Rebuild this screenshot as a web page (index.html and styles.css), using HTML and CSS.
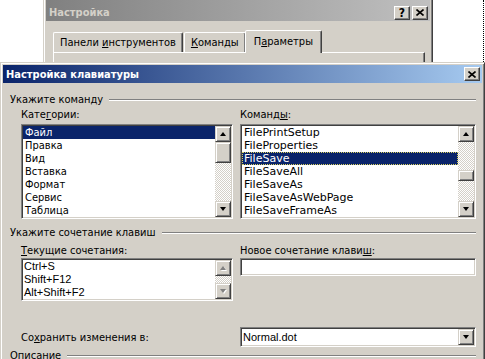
FILE: index.html
```html
<!DOCTYPE html>
<html>
<head>
<link rel="stylesheet" href="styles.css">
</head>
<body>

<div class="dots"></div>

<div class="win win-back">
	<div class="cap cap-off">
		<span class="cap-text">Настройка</span>
		<span class="cbtn cbtn-help">?</span>
		<span class="cbtn"><svg width="8" height="7" viewBox="0 0 8 7"><path d="M0.5 0.5L7.5 6.5M7.5 0.5L0.5 6.5" stroke="#000" stroke-width="1.6"/></svg></span>
	</div>
	<div class="tabs">
		<span class="tab">Панели <u>и</u>нструментов</span>
		<span class="tab"><u>К</u>оманды</span>
		<span class="tab tab-on">П<u>а</u>раметры</span>
	</div>
	<div class="tab-panel"></div>
</div>

<div class="win win-front">
	<div class="cap">
		<span class="cap-text">Настройка клавиатуры</span>
		<span class="cbtn"><svg width="8" height="7" viewBox="0 0 8 7"><path d="M0.5 0.5L7.5 6.5M7.5 0.5L0.5 6.5" stroke="#000" stroke-width="1.6"/></svg></span>
	</div>
	<div class="body">
		<div class="group">Укажите команду<i class="etch"></i></div>
		<div class="cols">
			<div class="col">
				<div class="lbl">Кате<u>г</u>ории:</div>
				<div class="list list-tall">
					<div class="items">
						<div class="item item-sel">Файл</div>
						<div class="item">Правка</div>
						<div class="item">Вид</div>
						<div class="item">Вставка</div>
						<div class="item">Формат</div>
						<div class="item">Сервис</div>
						<div class="item">Таблица</div>
					</div>
					<div class="vscroll">
						<span class="sbtn"><i class="arr-up"></i></span>
						<span class="thumb thumb-cat"></span>
						<span class="track"></span>
						<span class="sbtn"><i class="arr-down"></i></span>
					</div>
				</div>
			</div>
			<div class="col">
				<div class="lbl">Команд<u>ы</u>:</div>
				<div class="list list-tall">
					<div class="items items-cmd">
						<div class="item">FilePrintSetup</div>
						<div class="item">FileProperties</div>
						<div class="item item-sel item-focus">FileSave</div>
						<div class="item">FileSaveAll</div>
						<div class="item">FileSaveAs</div>
						<div class="item">FileSaveAsWebPage</div>
						<div class="item">FileSaveFrameAs</div>
					</div>
					<div class="vscroll">
						<span class="sbtn"><i class="arr-up"></i></span>
						<span class="track track-top"></span>
						<span class="thumb thumb-cmd"></span>
						<span class="track"></span>
						<span class="sbtn"><i class="arr-down"></i></span>
					</div>
				</div>
			</div>
		</div>

		<div class="group group-2">Укажите сочетание клавиш<i class="etch"></i></div>
		<div class="cols">
			<div class="col">
				<div class="lbl lbl-2"><u>Т</u>екущие сочетания:</div>
				<div class="list list-keys">
					<div class="items items-sys">
						<div class="item">Ctrl+S</div>
						<div class="item">Shift+F12</div>
						<div class="item">Alt+Shift+F2</div>
					</div>
					<div class="vscroll">
						<span class="sbtn"><i class="arr-up arr-off"></i></span>
						<span class="track"></span>
						<span class="sbtn"><i class="arr-down arr-off"></i></span>
					</div>
				</div>
			</div>
			<div class="col">
				<div class="lbl lbl-2">Новое сочетание клави<u>ш</u>:</div>
				<div class="field"></div>
			</div>
		</div>

		<div class="cols save-row">
			<div class="col save-lbl">Со<u>х</u>ранить изменения в:</div>
			<div class="col">
				<div class="combo">
					<span class="combo-val">Normal.dot</span>
					<span class="sbtn"><i class="arr-down"></i></span>
				</div>
			</div>
		</div>

		<div class="group group-3">Описание<i class="etch"></i></div>
	</div>
</div>

</body>
</html>
```

FILE: styles.css
```css
body {
	margin:0;
	background-color:#fff;
	font:11px "DejaVu Sans Condensed", "Liberation Sans", sans-serif;
	color:#000;
	overflow:hidden;
}
u {
	text-decoration:underline;
	text-underline-offset:1px;
}
.dots {
	position:absolute;
	left:483px;
	top:0;
	height:62px;
	border-left:1px dotted #000;
}
.win {
	position:absolute;
	background-color:#d4d0c8;
	border:1px solid;
	border-color:#d4d0c8 #404040 #404040 #d4d0c8;
	box-shadow:inset 1px 1px #fff, inset -1px -1px #808080;
	padding:2px;
}
.win-back {
	left:43px;
	top:-3px;
	width:384px;
	height:120px;
}
.win-front {
	left:0;
	top:62px;
	width:479px;
	height:320px;
}
.cap {
	display:flex;
	align-items:center;
	height:18px;
	padding:0 2px 0 2px;
	background:linear-gradient(to right, #0a246a, #a6caf0);
	color:#fff;
}
.cap-off {
	height:21px;
	background:linear-gradient(to right, #808080, #c0c0c0);
	color:#d4d0c8;
}
.cap-text {
	flex:1;
	font-weight:bold;
	padding-left:1px;
}
.cap-off .cap-text {
	padding-top:4px;
}
.cbtn {
	display:flex;
	align-items:center;
	justify-content:center;
	width:14px;
	height:12px;
	background-color:#d4d0c8;
	border:1px solid;
	border-color:#fff #404040 #404040 #fff;
	box-shadow:inset -1px -1px #808080;
	color:#000;
	font-weight:bold;
	font-size:12px;
	line-height:12px;
}
.cap-off .cbtn {
	margin-top:4px;
}
.cbtn-help {
	margin-right:2px;
}

.tabs {
	display:flex;
	align-items:flex-end;
	height:31px;
	padding-left:7px;
}
.tab {
	height:19px;
	line-height:19px;
	padding:0 6px;
	border:1px solid;
	border-bottom:none;
	border-color:#fff #404040 transparent #fff;
	border-radius:2px 2px 0 0;
	box-shadow:inset -1px 0 #808080;
	margin-right:1px;
}
.tab-on {
	height:22px;
	line-height:22px;
	margin:0 0 -1px -2px;
	padding:0 8px;
	position:relative;
	z-index:1;
	background-color:#d4d0c8;
}
.tab-panel {
	margin-left:7px;
	width:370px;
	height:60px;
	border:1px solid;
	border-color:#fff #404040 #404040 #fff;
	box-shadow:inset -1px 0 #808080;
}

.body {
	padding:10px 6px 0 7px;
}
.group {
	display:flex;
	align-items:center;
	height:13px;
	line-height:13px;
}
.etch {
	flex:1;
	margin-left:6px;
	border-top:1px solid #808080;
	border-bottom:1px solid #fff;
}
.group-2 {
	margin-top:7px;
}
.group-3 {
	margin-top:2px;
}
.cols {
	display:grid;
	grid-template-columns:212px 236px;
	column-gap:7px;
	padding-left:11px;
}
.lbl {
	height:13px;
	line-height:13px;
	margin:2px 0 3px 0;
}
.lbl-2 {
	margin:5px 0 1px 0;
}

.list, .field, .combo {
	background-color:#fff;
	border:1px solid;
	border-color:#808080 #fff #fff #808080;
	box-shadow:inset 1px 1px #404040, inset -1px -1px #d4d0c8;
	padding:1px;
}
.list {
	display:flex;
}
.list-tall {
	height:91px;
}
.list-keys {
	height:39px;
}
.items {
	flex:1;
	overflow:hidden;
}
.item {
	height:13px;
	line-height:13px;
	padding-left:2px;
	white-space:nowrap;
}
.item-sel {
	background-color:#0a246a;
	color:#fff;
}
.item-focus {
	outline:1px dotted #d8d060;
	outline-offset:-1px;
}
.items-cmd {
	font-family:"DejaVu Sans", sans-serif;
}
.items-sys {
	font-family:"Liberation Sans", sans-serif;
}
.items-sys .item {
	padding-left:1px;
}

.vscroll {
	display:flex;
	flex-direction:column;
	width:16px;
}
.sbtn {
	display:flex;
	align-items:center;
	justify-content:center;
	flex:none;
	width:14px;
	height:14px;
	background-color:#d4d0c8;
	border:1px solid;
	border-color:#d4d0c8 #404040 #404040 #d4d0c8;
	box-shadow:inset 1px 1px #fff, inset -1px -1px #808080;
}
.track {
	flex:1;
	background:repeating-conic-gradient(#fff 0 25%, #d4d0c8 0 50%) 0 0/2px 2px;
}
.track-top {
	flex:none;
	height:28px;
}
.thumb {
	flex:none;
	width:14px;
	background-color:#d4d0c8;
	border:1px solid;
	border-color:#d4d0c8 #404040 #404040 #d4d0c8;
	box-shadow:inset 1px 1px #fff, inset -1px -1px #808080;
}
.thumb-cat {
	height:19px;
}
.thumb-cmd {
	height:9px;
}
.arr-up, .arr-down {
	width:0;
	height:0;
	border-left:3.5px solid transparent;
	border-right:3.5px solid transparent;
}
.arr-up {
	border-bottom:4px solid #000;
}
.arr-down {
	border-top:4px solid #000;
}
.arr-up.arr-off {
	border-bottom-color:#808080;
	filter:drop-shadow(1px 1px 0 #fff);
}
.arr-down.arr-off {
	border-top-color:#808080;
	filter:drop-shadow(1px 1px 0 #fff);
}

.field {
	height:14px;
}
.save-row {
	margin-top:26px;
	align-items:center;
}
.combo {
	display:flex;
	align-items:center;
	height:16px;
}
.combo-val {
	flex:1;
	font-family:"Liberation Sans", sans-serif;
	padding-left:1px;
}
```
